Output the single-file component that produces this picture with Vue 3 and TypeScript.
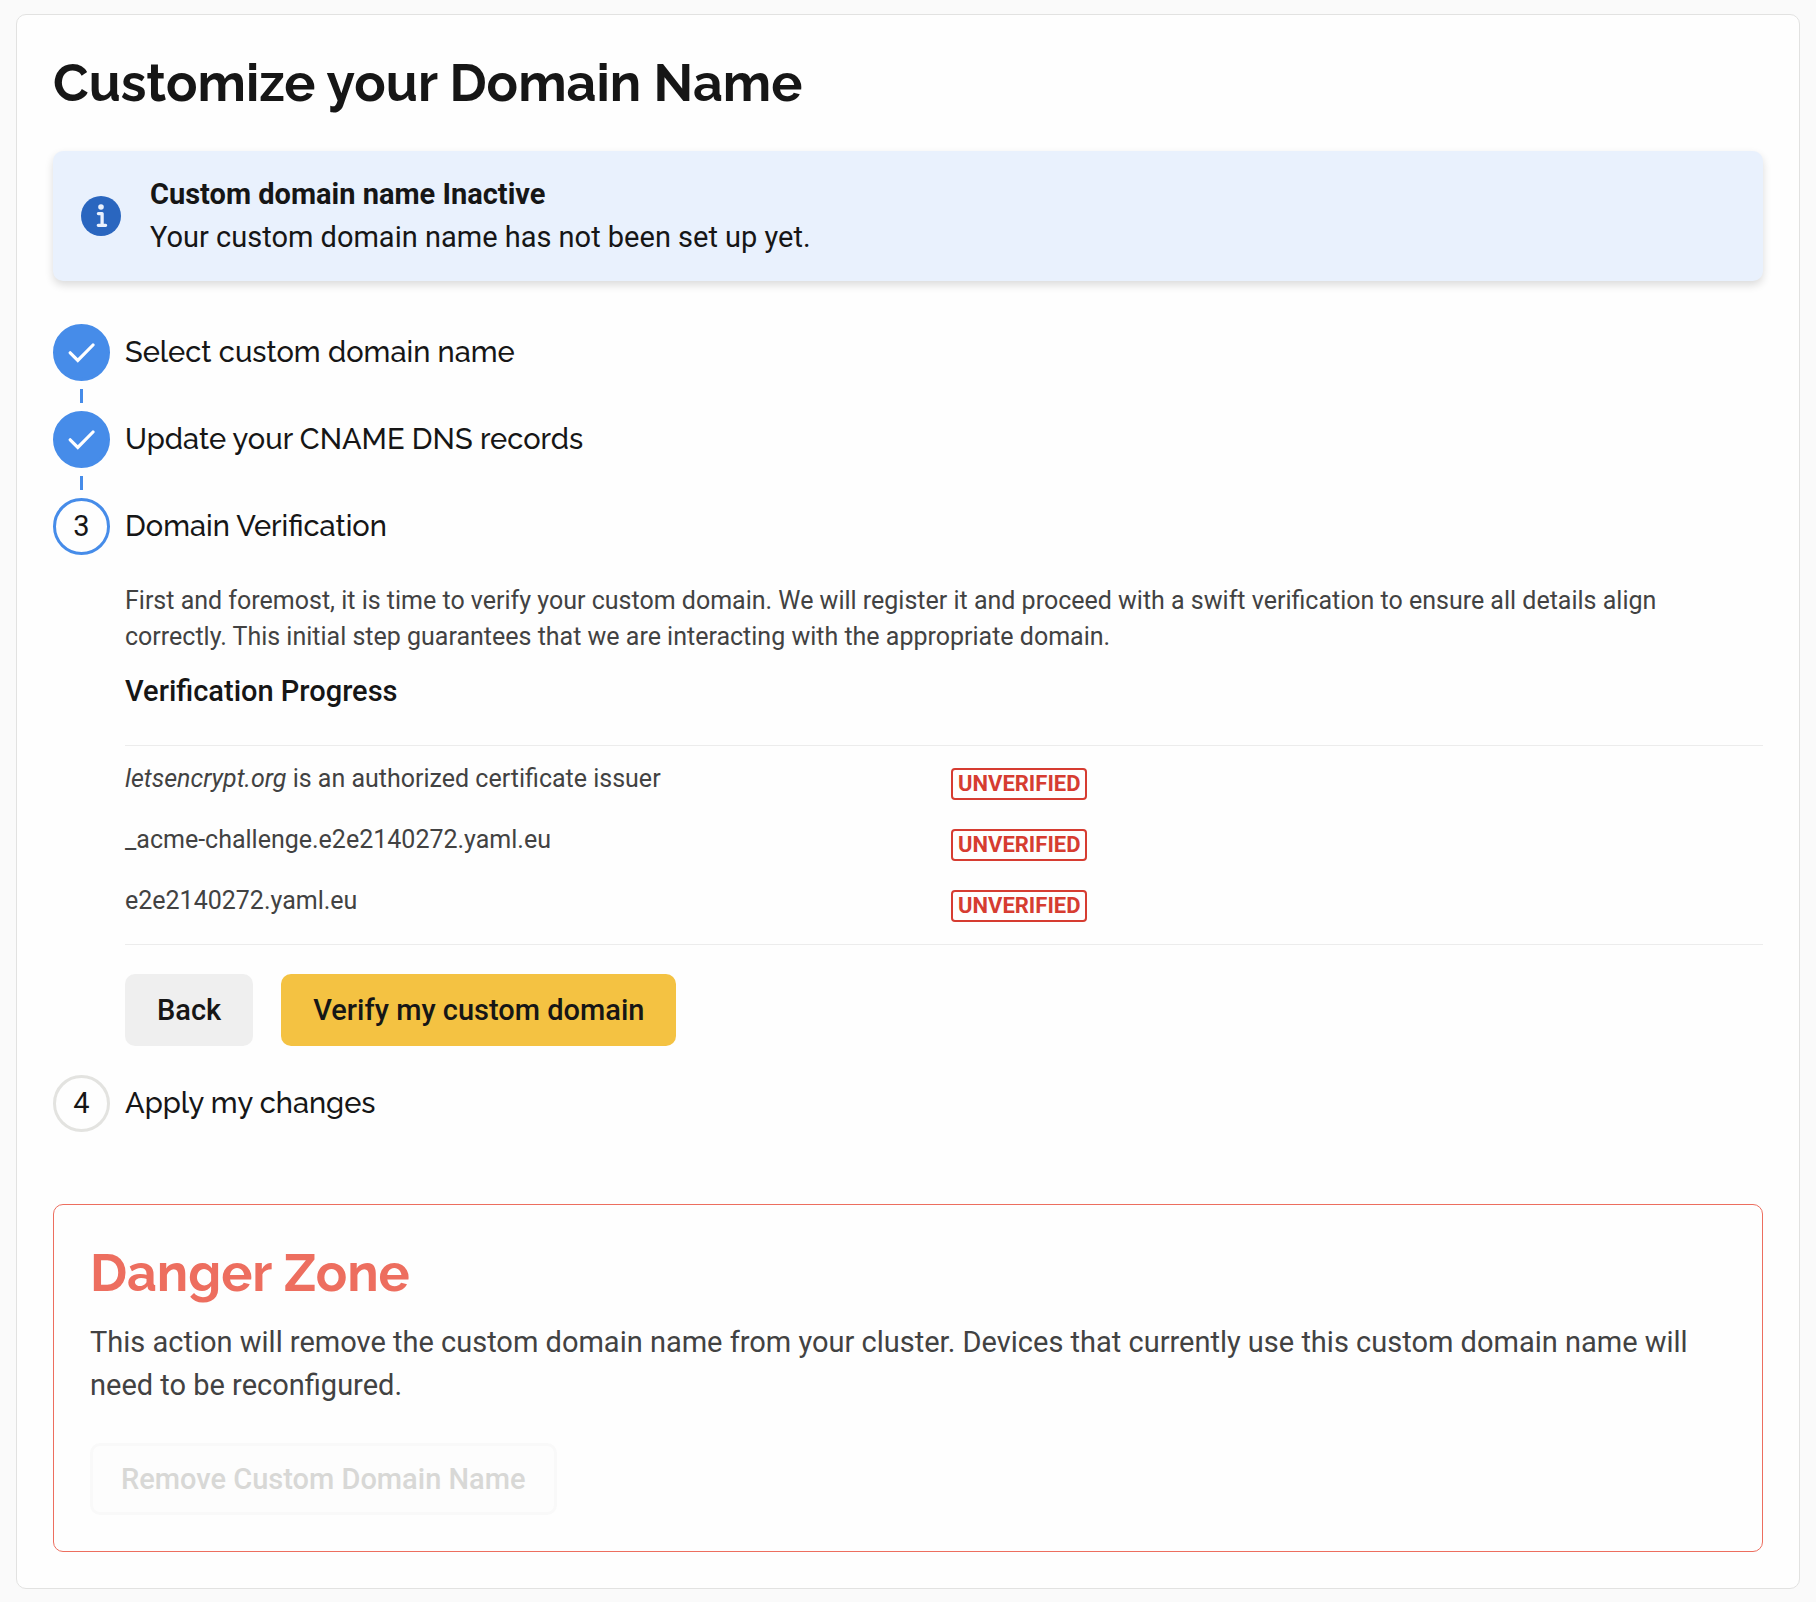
<script setup lang="ts">
interface Check {
  emphasis?: string
  text: string
  status: string
}

const checks: Check[] = [
  { emphasis: 'letsencrypt.org', text: ' is an authorized certificate issuer', status: 'UNVERIFIED' },
  { text: '_acme-challenge.e2e2140272.yaml.eu', status: 'UNVERIFIED' },
  { text: 'e2e2140272.yaml.eu', status: 'UNVERIFIED' },
]

const doneSteps: string[] = ['Select custom domain name', 'Update your CNAME DNS records']
</script>

<template>
  <main class="card">
    <h1 class="title">Customize your Domain Name</h1>

    <section class="alert" role="status">
      <svg class="alert-icon" viewBox="0 0 40 40" aria-hidden="true">
        <circle cx="20" cy="20" r="20" fill="#2a66bf" />
        <circle cx="20" cy="11" r="2.8" fill="#eaf1fd" />
        <path d="M17.4 17.6h3.7v11.5M17.3 29.3h7.3" fill="none" stroke="#eaf1fd" stroke-width="3.3" stroke-linecap="round" stroke-linejoin="round" />
      </svg>
      <div>
        <strong class="alert-title">Custom domain name Inactive</strong>
        <p class="alert-text">Your custom domain name has not been set up yet.</p>
      </div>
    </section>

    <ol class="steps">
      <li v-for="label in doneSteps" :key="label">
        <div class="step-head">
          <span class="marker done">
            <svg class="check" viewBox="0 0 28 22" aria-hidden="true">
              <path d="M2.2 10.8L9.8 18.4L25 3" fill="none" stroke="#fff" stroke-width="3.2" stroke-linecap="round" />
            </svg>
          </span>
          <h2 class="step-label">{{ label }}</h2>
        </div>
        <div class="connector"></div>
      </li>
      <li>
        <div class="step-head">
          <span class="marker current">3</span>
          <h2 class="step-label">Domain Verification</h2>
        </div>
        <div class="step-body">
          <p class="description">
            First and foremost, it is time to verify your custom domain. We will register it and proceed with a swift
            verification to ensure all details align correctly. This initial step guarantees that we are interacting
            with the appropriate domain.
          </p>
          <h3 class="progress-title">Verification Progress</h3>
          <div class="progress">
            <table class="checks">
              <tbody>
                <tr v-for="check in checks" :key="check.text">
                  <td><em v-if="check.emphasis">{{ check.emphasis }}</em>{{ check.text }}</td>
                  <td class="status"><span class="badge">{{ check.status }}</span></td>
                </tr>
              </tbody>
            </table>
          </div>
          <div class="actions">
            <button type="button" class="btn">Back</button>
            <button type="button" class="btn primary">Verify my custom domain</button>
          </div>
        </div>
      </li>
      <li>
        <div class="step-head">
          <span class="marker">4</span>
          <h2 class="step-label">Apply my changes</h2>
        </div>
      </li>
    </ol>

    <section class="danger">
      <h2 class="title danger-title">Danger Zone</h2>
      <p class="danger-text">
        This action will remove the custom domain name from your cluster. Devices that currently use this custom domain
        name will need to be reconfigured.
      </p>
      <button type="button" class="btn outline" disabled>Remove Custom Domain Name</button>
    </section>
  </main>
</template>

<style>
body {
  margin: 0;
  background: #fafafa;
}
</style>

<style scoped>
* {
  box-sizing: border-box;
}

.card {
  margin: 14px 16px 12px;
  padding: 36px;
  border: 1px solid #e2e2e1;
  border-radius: 10px;
  background: #fefefe;
  color: #161616;
  font-family: Roboto, sans-serif;
  font-size: 29px;
  line-height: 43px;
}

h1,
h2,
h3,
p {
  margin: 0;
}

.title {
  font-family: Raleway, Lato, sans-serif;
  font-size: 52px;
  font-weight: 700;
  line-height: 64px;
}

.alert {
  display: flex;
  align-items: center;
  gap: 29px;
  margin-top: 36px;
  padding: 22px 28px;
  border-radius: 10px;
  background: #e9f1fd;
  box-shadow: 0 4px 8px rgba(0, 0, 0, 0.14);
}

.alert-icon {
  flex: none;
  width: 40px;
  height: 40px;
}

.alert-title {
  display: block;
  font-weight: 700;
}

.steps {
  margin: 43px 0 0;
  padding: 0;
  list-style: none;
}

.step-head {
  display: flex;
  align-items: center;
  gap: 15px;
}

.marker {
  display: flex;
  flex: none;
  align-items: center;
  justify-content: center;
  width: 57px;
  height: 57px;
  border: 3px solid #e3e3e0;
  border-radius: 50%;
}

.marker.current {
  border-color: #468ce9;
}

.marker.done {
  border-color: #468ce9;
  background: #468ce9;
}

.check {
  width: 28px;
  height: 22px;
}

.step-label {
  font-family: Raleway, Lato, sans-serif;
  font-size: 29px;
  font-weight: 500;
}

.connector {
  width: 3px;
  height: 14px;
  margin: 8px 27px;
  background: #468ce9;
}

.step-body {
  padding: 28px 0 29px 72px;
}

.description {
  color: #424242;
  font-size: 25px;
  line-height: 36px;
}

.progress-title {
  margin-top: 15px;
  font-size: 29px;
  font-weight: 500;
}

.progress {
  margin-top: 32px;
  padding: 8px 0 7px;
  border-top: 1px solid #ececec;
  border-bottom: 1px solid #ececec;
}

.checks {
  width: 100%;
  border-collapse: collapse;
  table-layout: fixed;
  color: #424242;
  font-size: 25px;
  line-height: 36px;
}

.checks tr {
  height: 61px;
}

.checks td {
  padding: 7px 0 0;
  vertical-align: top;
}

.checks .status {
  padding: 14px 0 0 7px;
}

.badge {
  display: block;
  width: fit-content;
  padding: 0 5px;
  border: 2px solid #d63c31;
  border-radius: 4px;
  color: #d63c31;
  font-size: 22px;
  font-weight: 700;
  line-height: 28px;
}

.actions {
  display: flex;
  gap: 28px;
  margin-top: 29px;
}

.btn {
  height: 72px;
  padding: 0 32px;
  border: 0;
  border-radius: 10px;
  background: #efefef;
  color: #161616;
  font-family: inherit;
  font-size: 29px;
  font-weight: 500;
}

.btn.primary {
  background: #f4c242;
}

.btn.outline {
  margin-top: 36px;
  padding: 0 28px;
  border: 3px solid #f9f9f9;
  background: #fdfdfd;
  color: #d8d8d6;
}

.danger {
  display: flex;
  flex-direction: column;
  align-items: flex-start;
  margin-top: 72px;
  padding: 36px;
  border: 1px solid #ed6e5f;
  border-radius: 10px;
}

.danger-title {
  color: #ed6e5f;
}

.danger-text {
  margin-top: 16px;
  color: #424242;
}
</style>
